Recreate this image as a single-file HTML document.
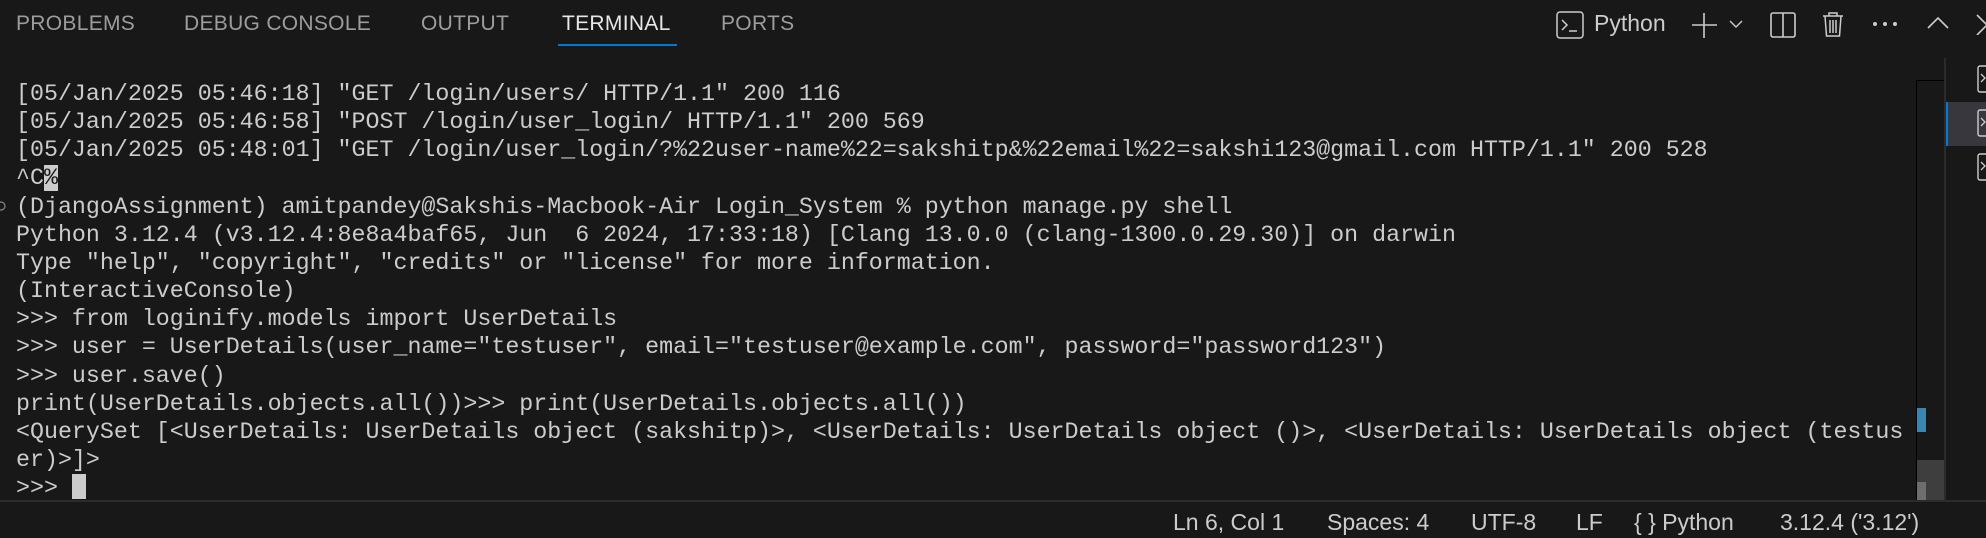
<!DOCTYPE html>
<html><head><meta charset="utf-8"><style>
html,body{margin:0;padding:0;width:1986px;height:538px;background:#181818;overflow:hidden;position:relative;font-family:"Liberation Sans",sans-serif;color:#cccccc}
.tab{position:absolute;top:12px;font-size:21px;color:#9d9d9d;letter-spacing:0.3px}
.term{position:absolute;left:16px;top:80px;font-family:"Liberation Mono",monospace;font-size:23.3px;line-height:28.15px;color:#cccccc;white-space:pre}
.status{position:absolute;top:509px;font-size:23px;color:#cccccc}
svg{position:absolute}
</style></head><body>
<div class="tab" style="left:16px">PROBLEMS</div>
<div class="tab" style="left:184px">DEBUG CONSOLE</div>
<div class="tab" style="left:421px">OUTPUT</div>
<div class="tab" style="left:562px;color:#e7e7e7">TERMINAL</div>
<div style="position:absolute;left:558px;top:44px;width:119px;height:2px;background:#0078d4"></div>
<div class="tab" style="left:721px">PORTS</div>

<svg style="left:1556px;top:11px" width="28" height="28" viewBox="0 0 28 28"><rect x="1" y="1" width="26" height="26" rx="3" fill="none" stroke="#ccc" stroke-width="1.5"/><path d="M6 9l5 5-5 5M13 20h8" fill="none" stroke="#ccc" stroke-width="1.5"/></svg>
<div style="position:absolute;left:1594px;top:10px;font-size:23px;color:#ccc">Python</div>
<svg style="left:1690px;top:11px" width="28" height="28"><path d="M14 2v25M2 14h25" stroke="#ccc" stroke-width="1.6"/></svg>
<svg style="left:1728px;top:18px" width="16" height="12"><path d="M2 3l6 6 6-6" fill="none" stroke="#ccc" stroke-width="1.4"/></svg>
<svg style="left:1769px;top:11px" width="28" height="28"><rect x="2" y="2" width="24" height="24" rx="2" fill="none" stroke="#ccc" stroke-width="1.6"/><path d="M14 2v24" stroke="#ccc" stroke-width="1.6"/></svg>
<svg style="left:1821px;top:10px" width="24" height="28"><path d="M2 6h20M8 6V3h8v3M4 6l1.5 20h13L20 6M9 10v13M12 10v13M15 10v13" fill="none" stroke="#ccc" stroke-width="1.5"/></svg>
<svg style="left:1872px;top:21px" width="26" height="6"><circle cx="3" cy="3" r="2" fill="#ccc"/><circle cx="13" cy="3" r="2" fill="#ccc"/><circle cx="23" cy="3" r="2" fill="#ccc"/></svg>
<svg style="left:1926px;top:15px" width="24" height="16"><path d="M2 13l10-10 10 10" fill="none" stroke="#ccc" stroke-width="1.6"/></svg>
<svg style="left:1976px;top:13px" width="12" height="22"><path d="M1 2l20 20M1 22L21 2" stroke="#ccc" stroke-width="1.6"/></svg>

<div class="term">[05/Jan/2025 05:46:18] "GET /login/users/ HTTP/1.1" 200 116
[05/Jan/2025 05:46:58] "POST /login/user_login/ HTTP/1.1" 200 569
[05/Jan/2025 05:48:01] "GET /login/user_login/?%22user-name%22=sakshitp&amp;%22email%22=sakshi123@gmail.com HTTP/1.1" 200 528
^C<span style="background:#ccc;color:#181818">%</span>
(DjangoAssignment) amitpandey@Sakshis-Macbook-Air Login_System % python manage.py shell
Python 3.12.4 (v3.12.4:8e8a4baf65, Jun  6 2024, 17:33:18) [Clang 13.0.0 (clang-1300.0.29.30)] on darwin
Type "help", "copyright", "credits" or "license" for more information.
(InteractiveConsole)
&gt;&gt;&gt; from loginify.models import UserDetails
&gt;&gt;&gt; user = UserDetails(user_name="testuser", email="testuser@example.com", password="password123")
&gt;&gt;&gt; user.save()
print(UserDetails.objects.all())&gt;&gt;&gt; print(UserDetails.objects.all())
&lt;QuerySet [&lt;UserDetails: UserDetails object (sakshitp)&gt;, &lt;UserDetails: UserDetails object ()&gt;, &lt;UserDetails: UserDetails object (testus
er)&gt;]&gt;
&gt;&gt;&gt; <span style="display:inline-block;width:14px;height:25px;background:#ccc;vertical-align:-5px"></span></div>
<svg style="left:0;top:200px" width="6" height="12"><circle cx="1" cy="6" r="4" fill="none" stroke="#888" stroke-width="1.2"/></svg>

<div style="position:absolute;left:1916px;top:80px;width:1px;height:420px;background:#000"></div>
<div style="position:absolute;left:1916px;top:80px;width:28px;height:1px;background:#000"></div>
<div style="position:absolute;left:1917px;top:408px;width:9px;height:24px;background:#3a86b0"></div>
<div style="position:absolute;left:1917px;top:460px;width:27px;height:40px;background:#3e3e3e"></div>
<div style="position:absolute;left:1917px;top:482px;width:9px;height:18px;background:#6e6e6e"></div>
<div style="position:absolute;left:1944px;top:58px;width:2px;height:442px;background:#2b2b2b"></div>
<div style="position:absolute;left:1946px;top:102px;width:40px;height:44px;background:#37373d"></div>
<div style="position:absolute;left:1946px;top:102px;width:2px;height:44px;background:#0078d4"></div>
<svg style="left:1977px;top:65px" width="12" height="28"><rect x="1" y="1" width="20" height="26" rx="2" fill="none" stroke="#ccc" stroke-width="1.4"/><path d="M4 9l4 4-4 4" fill="none" stroke="#ccc" stroke-width="1.3"/></svg>
<svg style="left:1977px;top:109px" width="12" height="28"><rect x="1" y="1" width="20" height="26" rx="2" fill="none" stroke="#ccc" stroke-width="1.4"/><path d="M4 9l4 4-4 4" fill="none" stroke="#ccc" stroke-width="1.3"/></svg>
<svg style="left:1977px;top:153px" width="12" height="28"><rect x="1" y="1" width="20" height="26" rx="2" fill="none" stroke="#ccc" stroke-width="1.4"/><path d="M4 9l4 4-4 4" fill="none" stroke="#ccc" stroke-width="1.3"/></svg>

<div style="position:absolute;left:0;top:500px;width:1986px;height:2px;background:#2b2b2b"></div>
<div class="status" style="left:1173px">Ln 6, Col 1</div>
<div class="status" style="left:1327px">Spaces: 4</div>
<div class="status" style="left:1471px">UTF-8</div>
<div class="status" style="left:1576px">LF</div>
<div class="status" style="left:1634px">{ } Python</div>
<div class="status" style="left:1780px">3.12.4 ('3.12')</div>
</body></html>
